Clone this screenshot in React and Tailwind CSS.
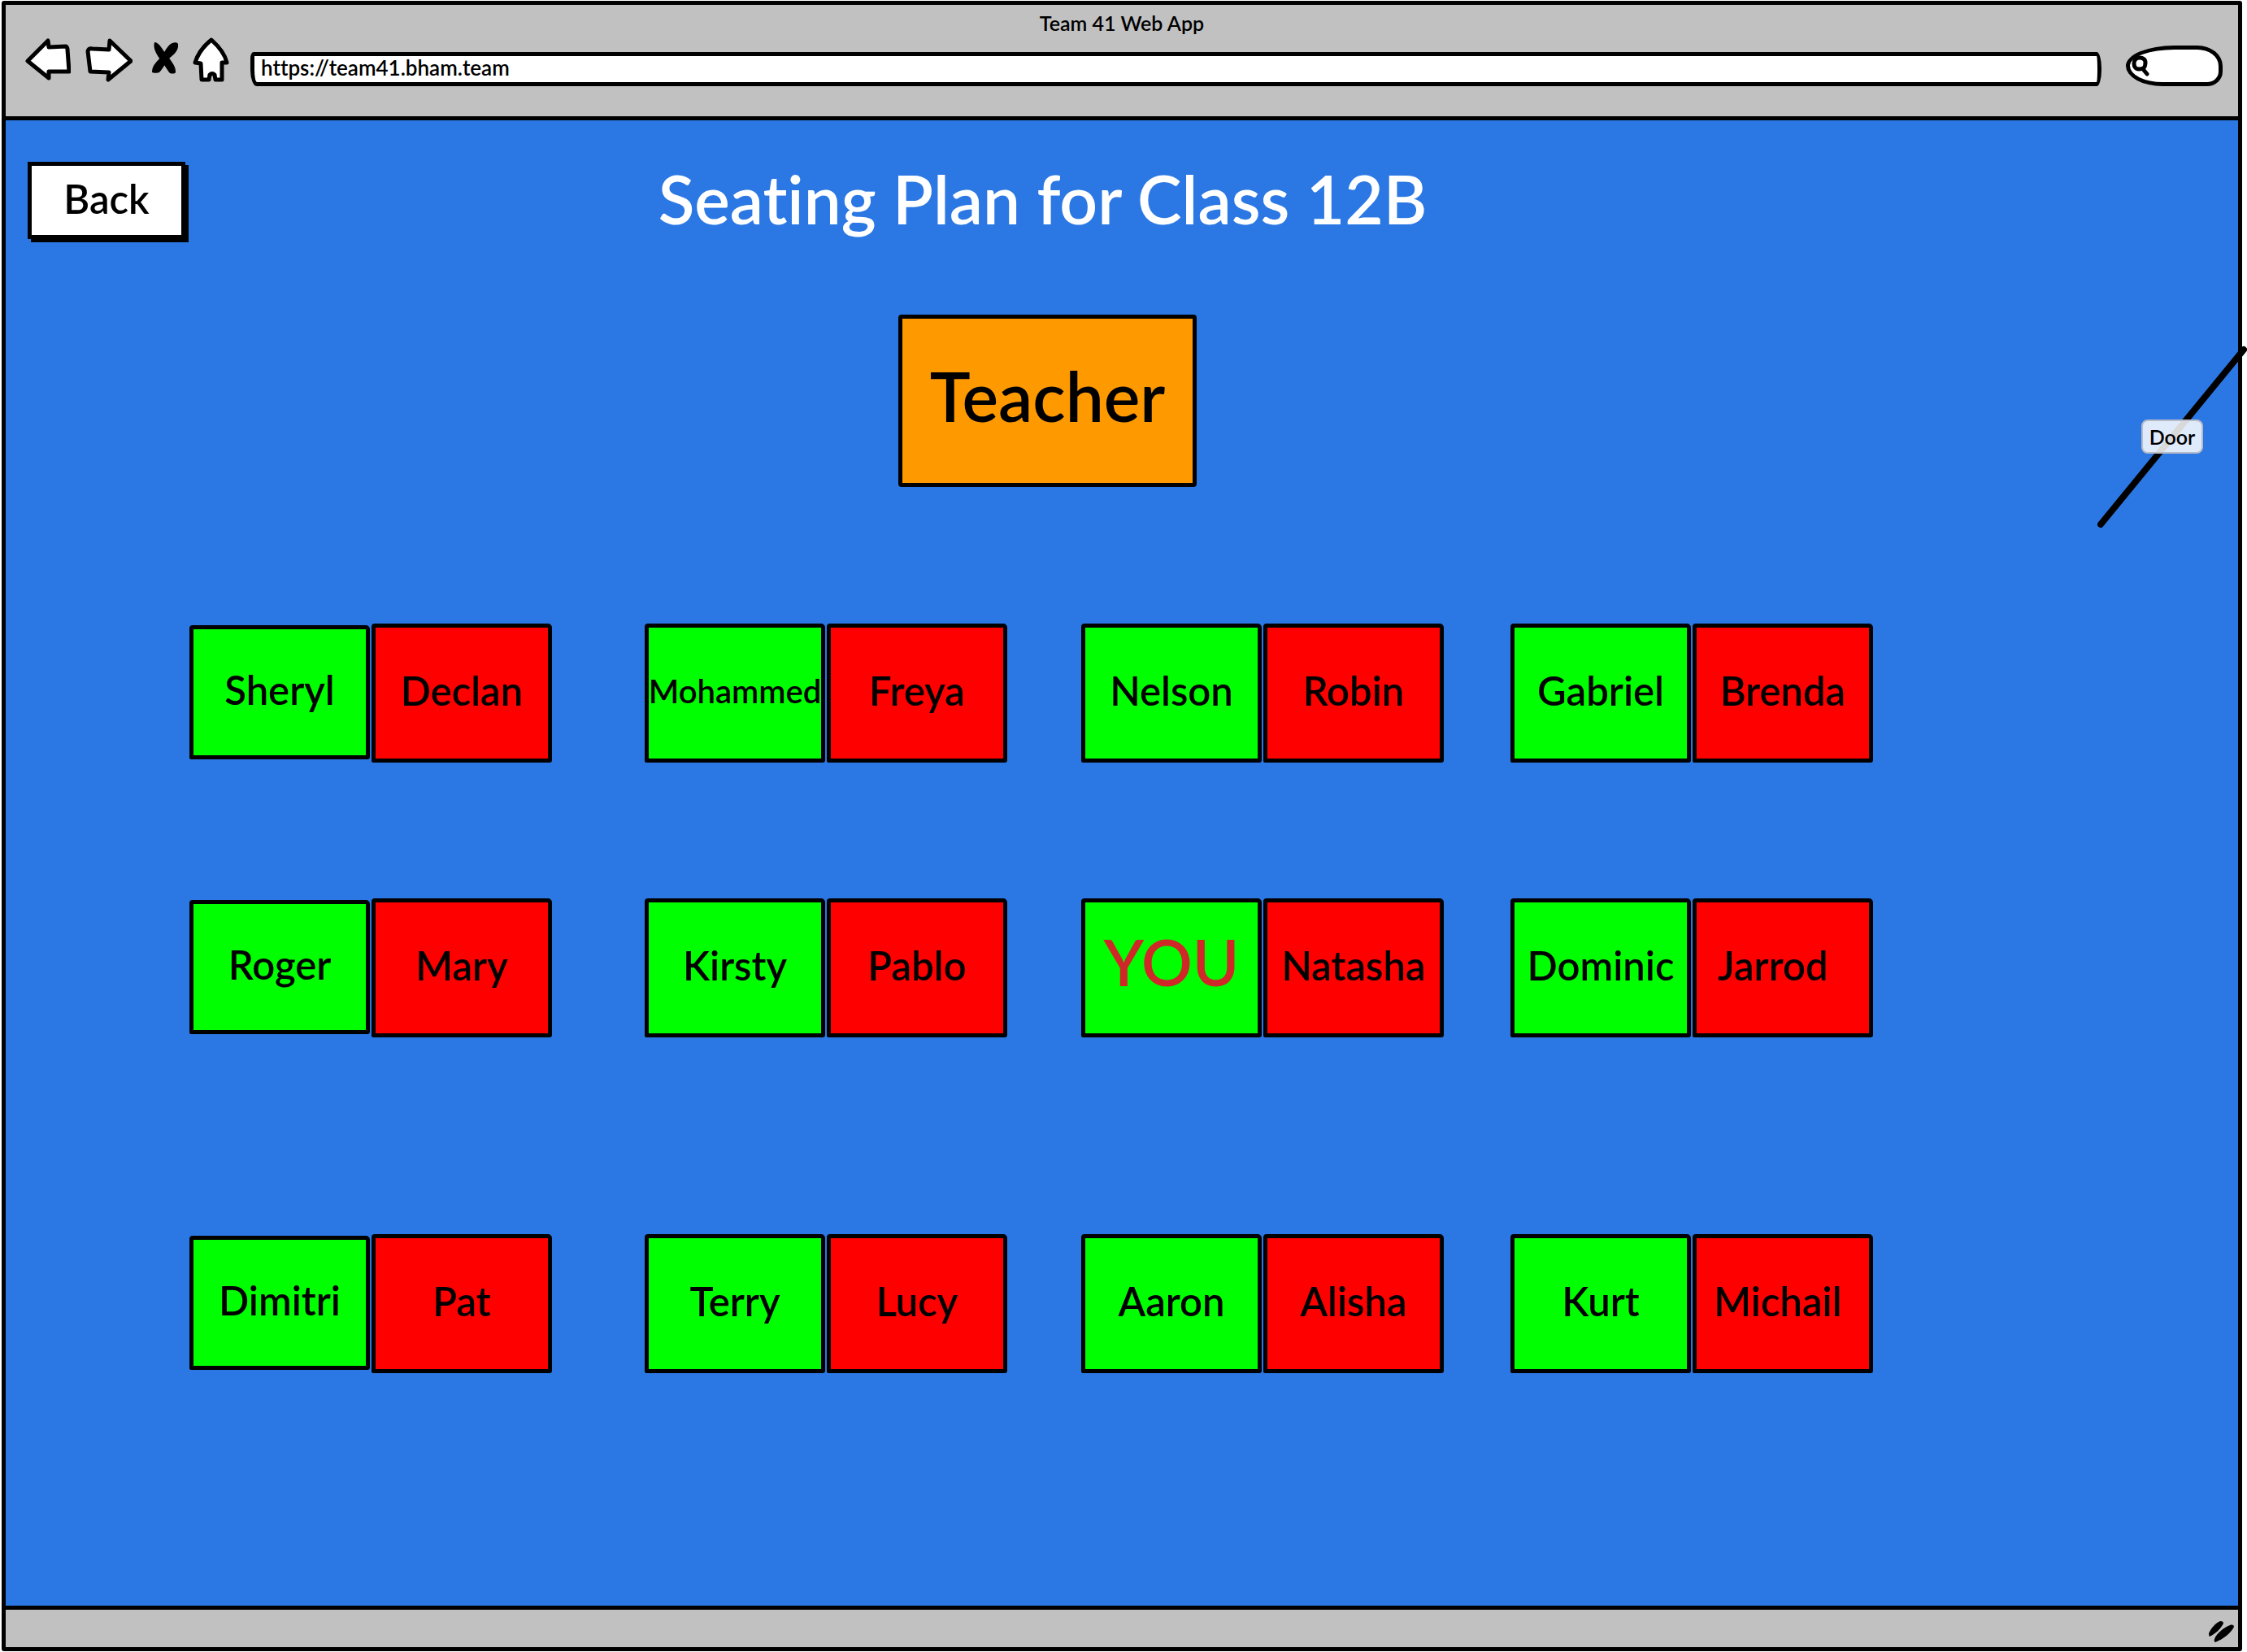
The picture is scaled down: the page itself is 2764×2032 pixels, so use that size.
const rows = [
  {
    spacing: "",
    pairs: [["Sheryl", "Declan"], ["Mohammed", "Freya"], ["Nelson", "Robin"], ["Gabriel", "Brenda"]],
  },
  {
    spacing: "mt-[167px]",
    pairs: [["Roger", "Mary"], ["Kirsty", "Pablo"], ["YOU", "Natasha"], ["Dominic", "Jarrod  "]],
  },
  {
    spacing: "mt-[242px]",
    pairs: [["Dimitri", "Pat"], ["Terry", "Lucy"], ["Aaron", "Alisha"], ["Kurt", "Michail "]],
  },
];

function nameStyle(name) {
  if (name === "YOU") return "pb-4 text-[78px] text-[#d02828] font-semibold";
  if (name === "Mohammed") return "pb-1.5 text-[40px] text-black font-semibold";
  return "pb-1.5 text-[49px] text-black font-semibold";
}

function Seat({ name, shape }) {
  return (
    <div
      className={`flex w-[222px] items-center justify-center rounded-[4px_5px_3px_2px] border-[5px] border-black leading-none whitespace-pre ${shape} ${nameStyle(name)}`}
    >
      {name}
    </div>
  );
}

function ToolButton({ label, width, children }) {
  return (
    <button type="button" aria-label={label} className="block shrink-0">
      <svg
        width={width}
        height="60"
        viewBox={`0 0 ${width} 60`}
        fill="white"
        stroke="black"
        strokeWidth="5"
        strokeLinejoin="round"
        strokeLinecap="round"
      >
        {children}
      </svg>
    </button>
  );
}

function BrowserBar() {
  return (
    <header className="border-b-[5px] border-black bg-[#c1c1c1] pt-2 pb-[37px]">
      <div className="mb-1 text-center text-[25px] leading-7 font-semibold">Team 41 Web App</div>
      <div className="flex items-end gap-[18px] pr-[19px] pl-6">
        <ToolButton label="Back" width={56}>
          <path d="M3 29L28 4L29 12L50 11Q52 12 52 15L54 42L29 42L29 50Z" />
        </ToolButton>
        <ToolButton label="Forward" width={58}>
          <path d="M3 17Q4 13 9 14L29 15L30 4L56 29L28 52L29 43L6 42Z" />
        </ToolButton>
        <ToolButton label="Stop" width={38}>
          <g fill="black" stroke="none">
            <path d="M9 6C14 6 18 13 22 19C27 26 36 35 35 43C34 45 29 45 27 43C23 37 20 32 16 27C11 20 7 13 9 6Z" />
            <path d="M38 8C39 16 33 21 28 25C23 30 20 38 15 43C13 44 8 44 6 43C6 34 12 30 17 24C22 18 25 9 31 7C34 6 37 6 38 8Z" />
          </g>
        </ToolButton>
        <ToolButton label="Home" width={45}>
          <path d="M23 3C33 12 40 21 42 31L36 31L36 52L28 52L27 46Q24 43 21 46L20 52L11 52L10 32L3 31C6 21 13 11 23 3Z" />
        </ToolButton>
        <input
          type="text"
          aria-label="Address"
          defaultValue="https://team41.bham.team"
          className="ml-2 h-[42px] min-w-0 flex-1 rounded-[4px_6px_6px_8px/8px_20px_20px_20px] border-[5px] border-black bg-white px-2 pb-1 text-[26px] leading-7 font-semibold text-black outline-none"
        />
        <label className="ml-3 flex h-[50px] w-[119px] items-center rounded-[50%_26%_16%_38%/50%_50%_36%_50%] border-[5px] border-black bg-white pl-0.5">
          <svg width="22" height="26" viewBox="0 0 22 26" className="shrink-0" fill="none" stroke="black" strokeWidth="5" strokeLinecap="round">
            <path d="M17 9C17 15 15 17 9 17C5 17 3 14 3 10C3 6 6 3 10 3C14 3 17 5 17 9Z" />
            <path d="M14 17L19 23" />
          </svg>
          <input type="text" aria-label="Search" className="w-full min-w-0 bg-transparent text-[25px] outline-none" />
        </label>
      </div>
    </header>
  );
}

function Door() {
  return (
    <div className="absolute top-[277px] right-[-11px]">
      <svg width="184" height="224" viewBox="0 0 184 224" className="block">
        <path d="M4 220L180 5" stroke="black" strokeWidth="8" strokeLinecap="round" />
      </svg>
      <div className="absolute inset-0 flex items-center justify-center">
        <span className="rounded-lg border-2 border-[#b8bcc8] bg-white/85 px-2 text-[25px] leading-[38px] font-semibold">
          Door
        </span>
      </div>
    </div>
  );
}

export default function App() {
  return (
    <div className="bg-white pt-px pr-1.5 pb-px pl-0.5 font-['Lato',sans-serif] text-black [font-variant-ligatures:none]">
      <div className="flex min-h-[calc(100vh-2px)] flex-col rounded-[3px] border-[5px] border-black">
        <BrowserBar />
        <main className="relative flex-1 bg-[#2b78e4] pt-[51px] pb-20">
          <div className="grid grid-cols-[1fr_auto_1fr] items-center pr-[222px] pl-[27px]">
            <button
              type="button"
              className="h-[95px] w-[194px] justify-self-start border-[5px] border-black bg-white pb-1 text-[49px] leading-none font-semibold shadow-[4px_4px_0_black]"
            >
              Back
            </button>
            <h1 className="pb-1 text-[82px] leading-[91px] font-semibold text-white">Seating Plan for Class 12B</h1>
          </div>
          <div className="mt-[93px] flex justify-center pr-[183px]">
            <div className="flex h-[212px] w-[367px] items-center justify-center rounded-[4px] border-[5px] border-black bg-[#ff9900] pb-3 text-[84px] leading-none font-semibold">
              Teacher
            </div>
          </div>
          <div className="mt-[168px] pl-[226px]">
            {rows.map((row, r) => (
              <div key={r} className={`grid grid-cols-[560fr_537fr_528fr_895fr] ${row.spacing}`}>
                {row.pairs.map(([left, right], c) => (
                  <div key={left} className="flex items-start gap-0.5">
                    <Seat
                      name={left}
                      shape={c === 0 ? "mt-0.5 h-[165px] bg-[#00ff00]" : "h-[171px] bg-[#00ff00]"}
                    />
                    <Seat name={right} shape="h-[171px] bg-[#ff0000]" />
                  </div>
                ))}
              </div>
            ))}
          </div>
          <Door />
        </main>
        <footer className="flex h-[51px] items-end justify-end border-t-[5px] border-black bg-[#c1c1c1] pr-1 pb-1">
          <svg width="32" height="28" viewBox="0 0 32 28">
            <path d="M0 15C3 8 9 2 14 0C17 0 18 1 18 3C14 10 9 15 1 19Q0 18 0 15Z" />
            <path d="M7 22C10 14 19 8 26 5C29 4 31 5 31 7C27 15 18 22 8 26Q6 25 7 22Z" />
          </svg>
        </footer>
      </div>
    </div>
  );
}
